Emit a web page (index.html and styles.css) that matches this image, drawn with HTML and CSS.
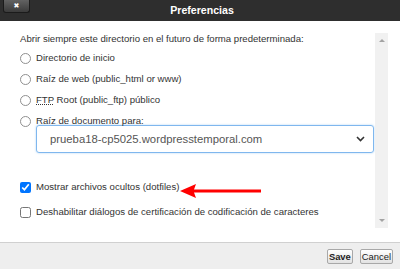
FILE: index.html
```html
<!DOCTYPE html>
<html lang="es">
<head>
  <meta charset="UTF-8">
  <title>Preferencias</title>
  <link rel="stylesheet" href="styles.css">
</head>
<body>
  <div class="dialogo">
    <div class="barra-titulo">
      <button class="cerrar">&#10006;</button>
      <span class="titulo">Preferencias</span>
    </div>

    <div class="contenido">
      <div class="opciones">
        <p class="intro">Abrir siempre este directorio en el futuro de forma predeterminada:</p>

        <div class="radios">
          <label class="fila"><input type="radio" name="dir" class="radio"> Directorio de inicio</label>
          <label class="fila"><input type="radio" name="dir" class="radio"> Raíz de web (public_html or www)</label>
          <label class="fila"><input type="radio" name="dir" class="radio"> <span><abbr>FTP</abbr> Root (public_ftp) público</span></label>
          <label class="fila"><input type="radio" name="dir" class="radio"> Raíz de documento para:</label>
        </div>

        <div class="selector">
          <span class="valor">prueba18-cp5025.wordpresstemporal.com</span>
          <svg class="chevron" width="9" height="6" viewBox="0 0 9 6">
            <path d="M1 1 L4.5 4.5 L8 1" fill="none" stroke="#333" stroke-width="1.6"/>
          </svg>
        </div>

        <div class="checks">
          <label class="fila marcada">
            <input type="checkbox" class="check" checked> Mostrar archivos ocultos (dotfiles)
            <!-- flecha roja de la captura -->
            <svg class="flecha" width="84" height="16" viewBox="0 0 84 16">
              <path d="M0 8 L16 1 L14 6.5 L81 6.5 L81 9.5 L14 9.5 L16 15 Z" fill="#ff0000"/>
            </svg>
          </label>
          <label class="fila"><input type="checkbox" class="check"> Deshabilitar diálogos de certificación de codificación de caracteres</label>
        </div>
      </div>

      <div class="scroll">
        <span class="tri arriba"></span>
        <span class="tri abajo"></span>
      </div>
    </div>

    <div class="pie">
      <button class="boton guardar">Save</button>
      <button class="boton">Cancel</button>
    </div>
  </div>
</body>
</html>
```

FILE: styles.css
```css
body {
  margin: 0;
  font-family: "Liberation Sans", Arial, sans-serif;
  background: #ffffff;
  color: #333;
  width: 400px;
  height: 269px;
  overflow: hidden;
}

.dialogo {
  display: flex;
  flex-direction: column;
  height: 269px;
}

.barra-titulo {
  height: 21px;
  background-color: #2e2e2e;
  border-bottom: 1px solid #ffffff;
  display: grid;
  grid-template-columns: 1fr auto 1fr;
  align-items: start;
}

.cerrar {
  justify-self: start;
  margin-left: 3px;
  width: 27px;
  height: 13px;
  padding: 0;
  background: linear-gradient(#626262, #3b3b3b);
  border: 1px solid #1b1b1b;
  border-top: none;
  border-radius: 0 0 3px 3px;
  color: #ffffff;
  font-family: "DejaVu Sans", sans-serif;
  font-size: 7px;
  font-weight: bold;
  line-height: 12px;
}

.titulo {
  color: #ffffff;
  font-size: 10.6px;
  font-weight: bold;
  line-height: 21px;
  margin-left: 4px;
}

.contenido {
  flex: 1;
  display: flex;
  padding: 11px 12px 14px 20px;
}

.opciones {
  flex: 1;
  font-size: 9.6px;
}

.intro {
  margin: 0;
  line-height: 12px;
}

.radios {
  display: flex;
  flex-direction: column;
  gap: 7px;
  margin-top: 6px;
}

.fila {
  display: flex;
  align-items: center;
  gap: 5px;
  line-height: 14px;
}

abbr {
  text-decoration: underline dotted;
}

.radio {
  appearance: none;
  margin: 0;
  width: 11px;
  height: 11px;
  border: 1px solid #909090;
  border-radius: 50%;
  background: #ffffff;
}

.selector {
  margin: -3px 1px 0 16px;
  height: 28px;
  box-sizing: border-box;
  border: 1px solid #7fb7ee;
  border-radius: 3px;
  box-shadow: 0 0 2px rgba(102, 175, 233, 0.6);
  display: flex;
  align-items: center;
  justify-content: space-between;
  padding: 0 8px 0 13px;
  color: #555;
  font-size: 11.3px;
}

.checks {
  display: flex;
  flex-direction: column;
  gap: 11px;
  margin-top: 27px;
}

.check {
  margin: 0;
  width: 11px;
  height: 11px;
}

.marcada {
  position: relative;
}

.flecha {
  position: absolute;
  left: 160px;
  top: 3px;
}

.scroll {
  width: 13px;
  background-color: #f1f1f1;
  display: flex;
  flex-direction: column;
  justify-content: space-between;
  align-items: center;
  padding: 6px 0;
}

.tri {
  width: 0;
  height: 0;
  border-left: 3px solid transparent;
  border-right: 3px solid transparent;
}

.arriba { border-bottom: 3px solid #a3a3a3; }
.abajo { border-top: 3px solid #a3a3a3; }

.pie {
  height: 26px;
  border-top: 1px solid #d0d0d0;
  background-color: #eeeeee;
  display: flex;
  justify-content: flex-end;
  align-items: center;
  gap: 7px;
  padding-right: 7px;
}

.boton {
  height: 15px;
  padding: 0 1px;
  font-family: "Liberation Sans", Arial, sans-serif;
  font-size: 9.4px;
  color: #222;
  background: linear-gradient(#ffffff, #e2e2e2);
  border: 1px solid #a8a8a8;
  border-radius: 2px;
}

.guardar {
  font-weight: bold;
}
```
